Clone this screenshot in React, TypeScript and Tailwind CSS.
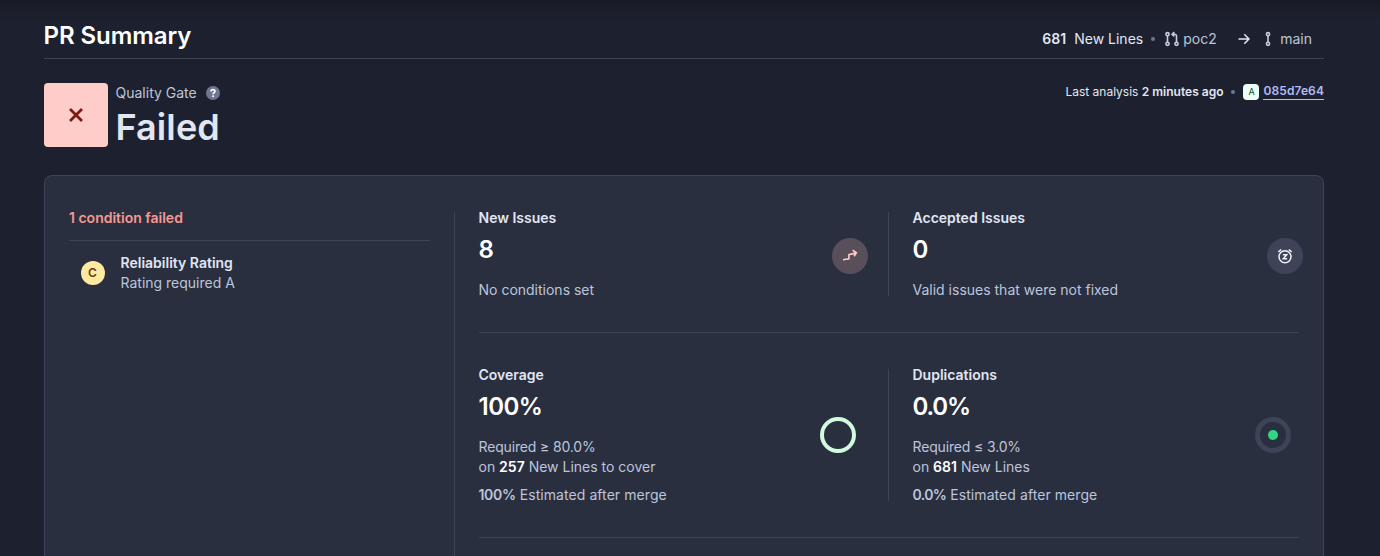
import React from "react";

function Help() {
  return (
    <svg width="14" height="14" viewBox="0 0 14 14" className="ml-[9px]">
      <circle cx="7" cy="7" r="7" fill="#6f7692" />
      <path d="M5 5.500C5 4.300 5.800 3.600 7 3.600s2 .7 2 1.700c0 1.300-1.900 1.400-1.900 2.900" fill="none" stroke="#fff" strokeWidth="1.700" />
      <circle cx="7.100" cy="10.200" r="1" fill="#fff" />
    </svg>
  );
}

function PullRequestIcon() {
  return (
    <svg width="16" height="16" viewBox="0 0 16 16" fill="none" stroke="#c5cddf" strokeWidth="1.6" className="ml-[8.5px]">
      <circle cx="3.5" cy="3.2" r="1.6" />
      <circle cx="3.5" cy="12.8" r="1.6" />
      <circle cx="12.5" cy="12.8" r="1.6" />
      <path d="M3.500 4.800v6.400M12.500 11.200V5.200c0-1.300-.7-2-2-2H8.400M10.300 1 8.100 3.200l2.200 2.200" />
    </svg>
  );
}

function BranchIcon() {
  return (
    <svg width="8" height="16" viewBox="0 0 8 16" fill="none" stroke="#c5cddf" strokeWidth="1.6" className="ml-[14px]">
      <circle cx="4" cy="3.2" r="1.6" />
      <circle cx="4" cy="12.8" r="1.6" />
      <path d="M4 4.800v6.400" />
    </svg>
  );
}

function Dot({ className }: { className: string }) {
  return <span className={`size-1 rounded-full bg-[#6f7692] ${className}`} />;
}

type MeasureProps = {
  title: string;
  value: React.ReactNode;
  children: React.ReactNode;
  icon: React.ReactNode;
  bordered?: boolean;
};

function Measure({ title, value, children, icon, bordered }: MeasureProps) {
  return (
    <div className={bordered ? "relative flex w-[410px] justify-between" : "relative flex w-[410px] justify-between pl-6"}>
      <div className="-mt-1 -mb-1 -ml-[0.5px]">
        <div className="font-semibold text-[#e1e6f3]">{title}</div>
        <div className="mt-1.5 text-2xl leading-8 font-semibold text-white">{value}</div>
        <div className="mt-3.5 text-[#bcc5da]">{children}</div>
      </div>
      {icon}
      {bordered && <span className="absolute top-0 right-0 h-full w-px bg-[#3e4357]" />}
    </div>
  );
}

export default function App() {
  return (
    <div className="h-[556px] overflow-hidden bg-[#1d212f] bg-[linear-gradient(to_bottom,#181b26_0px,#1d212f_22px)] pr-14 pl-11 font-['Inter',sans-serif] text-sm leading-5 text-[#bcc5da]">
      <header className="flex h-[59px] items-start justify-between border-b border-[#3e4357] pt-5">
        <h1 className="-ml-[0.5px] text-2xl leading-8 font-semibold tracking-[-0.07px] text-white">PR Summary</h1>
        <div className="flex h-5 items-center pt-[18px] pr-3">
          <span className="font-semibold text-[#e1e6f3]">681</span>
          <span className="ml-2 text-[#e1e6f3]">New Lines</span>
          <Dot className="ml-2" />
          <PullRequestIcon />
          <span className="ml-[3.5px]">poc2</span>
          <svg width="12" height="12" viewBox="0 0 12 12" fill="none" stroke="#e1e6f3" strokeWidth="1.5" className="ml-[21.5px]">
            <path d="M.5 6H11M6.3 1.2 11 6l-4.700 4.800" />
          </svg>
          <BranchIcon />
          <span className="ml-2">main</span>
        </div>
      </header>
      <section className="flex h-[116px] items-start justify-between pt-6">
        <div className="flex gap-2">
          <div className="flex size-16 items-center justify-center rounded bg-[#fecdca]">
            <svg width="16" height="16" viewBox="0 0 16 16" fill="none" stroke="#7a1a10" strokeWidth="2.8">
              <path d="m2 2 12 12M14 2 2 14" />
            </svg>
          </div>
          <div className="-ml-[0.5px]">
            <div className="flex items-center">
              Quality Gate
              <Help />
            </div>
            <div className="text-4xl leading-12 font-semibold tracking-[0.1px] text-[#e1e6f3]">Failed</div>
          </div>
        </div>
        <div className="flex h-[18px] items-center text-xs text-[#e1e6f3]">
          <span>
            Last analysis <b className="font-semibold">2 minutes ago</b>
          </span>
          <Dot className="ml-2" />
          <span className="ml-2 flex size-4 items-center justify-center rounded bg-[#ecfdf3] text-[9px] text-[#054f31]">A</span>
          <a className="-mt-px ml-1 border-b border-[#b4bbf5] leading-4 font-semibold tracking-[0.1px] text-[#b4bbf5]">085d7e64</a>
        </div>
      </section>
      <main className="flex h-[500px] rounded-t-lg border border-[#3e4357] bg-[#2a2f40] pl-6">
        <section className="w-[361px] shrink-0 pt-8">
          <div className="h-[33px] border-b border-[#3e4357] font-semibold text-[#f79892]">1 condition failed</div>
          <div className="flex items-center pt-3 pl-3">
            <span className="flex size-6 items-center justify-center rounded-full bg-[#fde9a0] pr-px text-xs font-semibold text-[#693d11]">C</span>
            <div className="ml-[15.5px]">
              <div className="font-semibold text-[#e1e6f3]">Reliability Rating</div>
              <div>Rating required A</div>
            </div>
          </div>
        </section>
        <section className="mt-9 ml-6 w-[845px] shrink-0 border-l border-[#3e4357] pl-6">
          <div className="flex h-[121px] border-b border-[#3e4357] pb-9">
            <Measure
              title="New Issues"
              value="8"
              bordered
              icon={
                <span className="mt-[26px] mr-[21px] flex size-9 items-center justify-center rounded-full bg-[#594f5b]">
                  <svg width="16" height="16" viewBox="0 0 16 16" fill="none" stroke="#fecdca" strokeWidth="1.600">
                    <path d="M1 11.700 6.900 10.900V6.600L14 4.900M10.600 2.100 14.400 4.800 12.100 8.300" />
                  </svg>
                </span>
              }
            >
              No conditions set
            </Measure>
            <Measure
              title="Accepted Issues"
              value="0"
              icon={
                <span className="mt-[26px] -mr-1 flex size-9 items-center justify-center rounded-full bg-[#3e4357]">
                  <svg width="16" height="16" viewBox="0 0 16 16" fill="none" stroke="#eff2f9" strokeWidth="1.500">
                    <circle cx="8" cy="8.700" r="6" />
                    <path d="M1.300 3.900 4.300 1.500M11.700 1.500l3 2.400M5.900 6.700h3.800L6.300 10.700h3.900" />
                  </svg>
                </span>
              }
            >
              Valid issues that were not fixed
            </Measure>
          </div>
          <div className="flex h-[205px] border-b border-[#3e4357] pt-9 pb-9">
            <Measure
              title="Coverage"
              value={<span className="tracking-[-0.5px]">100%</span>}
              bordered
              icon={<span className="mt-12 mr-[33px] size-9 rounded-full border-4 border-[#d1fadf]" />}
            >
              <div className="tracking-[-0.15px]">Required ≥ 80.0%</div>
              <div>
                on <b className="font-semibold text-white">257</b> New Lines to cover
              </div>
              <div className="mt-2">
                <b className="font-semibold tracking-[-0.3px]">100%</b> <span className="tracking-[0.07px]">Estimated after merge</span>
              </div>
            </Measure>
            <Measure
              title="Duplications"
              value={<span className="tracking-[-1.2px]">0.0%</span>}
              icon={
                <span className="mt-12 mr-2 flex size-9 items-center justify-center rounded-full border-[5px] border-[#3e4357]">
                  <span className="size-[10px] rounded-full bg-[#32d583]" />
                </span>
              }
            >
              <div className="tracking-[-0.15px]">Required ≤ 3.0%</div>
              <div>
                on <b className="font-semibold text-white">681</b> New Lines
              </div>
              <div className="mt-2">
                <b className="font-semibold tracking-[-0.6px]">0.0%</b> <span className="tracking-[0.07px]">Estimated after merge</span>
              </div>
            </Measure>
          </div>
        </section>
      </main>
    </div>
  );
}
